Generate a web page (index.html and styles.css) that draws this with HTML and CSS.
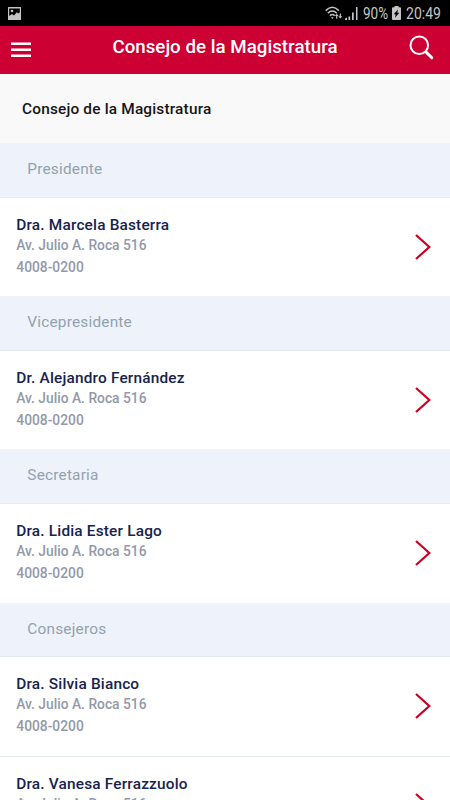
FILE: index.html
```html
<!DOCTYPE html>
<html lang="es">
<head>
<meta charset="utf-8">
<title>Consejo de la Magistratura</title>
<link rel="stylesheet" href="styles.css">
</head>
<body>
<div class="status">
  <svg class="status-picture" width="13" height="13" viewBox="0 0 13 13"><path fill="#c4c4c4" fill-rule="evenodd" d="M0 .5Q0 0 .5 0h12q.5 0 .5.5v12q0 .5-.5.5H.5Q0 13 0 12.500zM1.200 1.400V9L4 7l2 1.500L9 5l.8 1.500 2-1V1.400z"/><circle cx="4" cy="4" r="1.300" fill="#c4c4c4"/></svg>
  <div class="status-right">
    <svg class="status-wifi" width="18" height="15" viewBox="0 0 18 15" fill="none" stroke="#c4c4c4" stroke-width="1.500"><path d="M.7 4.600Q7.300-2 13.900 4.600M2.800 7.200Q7.300 2.800 11.800 7.200M4.900 9.700Q7.300 7.400 9.700 9.700"/><path fill="#c4c4c4" stroke="none" d="M5.900 11.200h2.800l-1.400 1.700zM9.800 10l1.900-2.300L13.600 10h-1.300v2.800h-1.200V10zM13.300 10.300h1.400V7.500h1.200v2.800h1.400l-2 2.300z"/></svg>
    <svg class="status-signal" width="13" height="13" viewBox="0 0 13 13" fill="#c4c4c4"><path d="M0 13v-1.500l2-1V13zM3.500 9.500h1.700V13H3.500zM7 5.500h1.700V13H7zM11 0h1.500v13H11z"/></svg>
    <span class="status-percent">90%</span>
    <svg class="status-battery" width="9" height="14" viewBox="0 0 9 14"><path fill="#c4c4c4" fill-rule="evenodd" d="M2.500 0h4v1.300H8q1 0 1 1V13q0 1-1 1H1q-1 0-1-1V2.300q0-1 1-1h1.500zM6 3.500 1.700 8.300h2L3 11.800l4.300-5H5.200z"/></svg>
    <span class="status-time">20:49</span>
  </div>
</div>
<header class="bar">
  <svg class="menu" width="20" height="16" viewBox="0 0 20 16" fill="#fff"><path d="M0 .4h20V3H0zM0 6.500h20v2.400H0zM0 12.500h20v2.600H0z"/></svg>
  <h1 class="bar-title"><span>Consejo de la Magistratura</span></h1>
  <svg class="search" width="26" height="26" viewBox="0 0 26 26" fill="none" stroke="#fff"><circle cx="10.300" cy="10.300" r="8.800" stroke-width="2"/><path d="m16.500 16.500 1.500 1.500" stroke-width="2"/><path d="m17.500 17.500 5.300 5.300" stroke-width="3" stroke-linecap="round"/></svg>
</header>
<main>
  <h2 class="heading"><span>Consejo de la Magistratura</span></h2>
  <h3 class="group"><span>Presidente</span></h3>
  <article class="person">
    <div><p class="name">Dra. Marcela Basterra</p><p class="info">Av. Julio A. Roca 516</p><p class="info">4008-0200</p></div>
    <svg class="arrow" viewBox="0 0 16 26"><path d="m1 1 13.300 12L1 25"/></svg>
  </article>
  <h3 class="group"><span>Vicepresidente</span></h3>
  <article class="person">
    <div><p class="name">Dr. Alejandro Fernández</p><p class="info">Av. Julio A. Roca 516</p><p class="info">4008-0200</p></div>
    <svg class="arrow" viewBox="0 0 16 26"><path d="m1 1 13.300 12L1 25"/></svg>
  </article>
  <h3 class="group"><span>Secretaria</span></h3>
  <article class="person">
    <div><p class="name">Dra. Lidia Ester Lago</p><p class="info">Av. Julio A. Roca 516</p><p class="info">4008-0200</p></div>
    <svg class="arrow" viewBox="0 0 16 26"><path d="m1 1 13.300 12L1 25"/></svg>
  </article>
  <h3 class="group"><span>Consejeros</span></h3>
  <article class="person">
    <div><p class="name">Dra. Silvia Bianco</p><p class="info">Av. Julio A. Roca 516</p><p class="info">4008-0200</p></div>
    <svg class="arrow" viewBox="0 0 16 26"><path d="m1 1 13.300 12L1 25"/></svg>
  </article>
  <article class="person">
    <div><p class="name">Dra. Vanesa Ferrazzuolo</p><p class="info">Av. Julio A. Roca 516</p></div>
    <svg class="arrow" viewBox="0 0 16 26"><path d="m1 1 13.300 12L1 25"/></svg>
  </article>
</main>
</body>
</html>
```
FILE: styles.css
```css
* { box-sizing: border-box; margin: 0; padding: 0; }
body {
  height: 800px;
  overflow: hidden;
  background: #fff;
  font-family: Roboto, "Liberation Sans", sans-serif;
}
svg { display: block; flex: none; }
.status {
  height: 26px;
  padding: 0 9px 0 8px;
  display: flex;
  align-items: center;
  justify-content: space-between;
  background: #000;
  color: #c4c4c4;
  font-size: 16.500px;
  line-height: 26px;
}
.status-right { display: flex; align-items: center; }
.status-signal { margin: 0 5px 0 2px; }
.status-percent, .status-time { display: block; padding-top: 2px; line-height: 24px; transform-origin: left; white-space: nowrap; }
.status-percent { width: 26px; margin-right: 3px; transform: scaleX(.82); }
.status-time { width: 35px; margin-left: 5px; transform: scaleX(.85); }
.bar {
  height: 48px;
  padding: 0 15px 0 11px;
  display: flex;
  align-items: center;
  justify-content: space-between;
  background: #cc0033;
  color: #fff;
}
.menu { margin-top: -1px; }
.bar-title { padding: 0 0 7px 10px; font-size: 18.700px; font-weight: 500; line-height: 24px; letter-spacing: .03px; }
.search { margin-top: -5px; }
.heading {
  height: 69px;
  padding: 23px 22px 0;
  background: #f9f9f9;
  color: #161616;
  font-size: 15.400px;
  font-weight: 500;
  line-height: 24px;
  letter-spacing: .18px;
}
.group {
  height: 54.900px;
  padding: 14px 27.300px 0;
  background: #eef3fb;
  border-bottom: 1px solid #e3eaf0;
  color: #93a1ae;
  font-size: 15.400px;
  font-weight: 400;
  line-height: 24px;
  letter-spacing: .2px;
}
.person {
  height: 98.300px;
  padding: 17px 19.300px 0 16.300px;
  display: flex;
  justify-content: space-between;
}
.person + .person { height: 99.300px; border-top: 1px solid #e2eaf1; }
.name { color: #17234e; font-size: 15.400px; font-weight: 500; line-height: 20px; letter-spacing: .18px; }
.info { color: #9299aa; font-size: 13.800px; font-weight: 500; line-height: 22px; }
.name + .info { line-height: 21px; }
.arrow { width: 16px; height: 26px; margin-top: 19px; fill: none; stroke: #cc0022; stroke-width: 2.200; }
```
